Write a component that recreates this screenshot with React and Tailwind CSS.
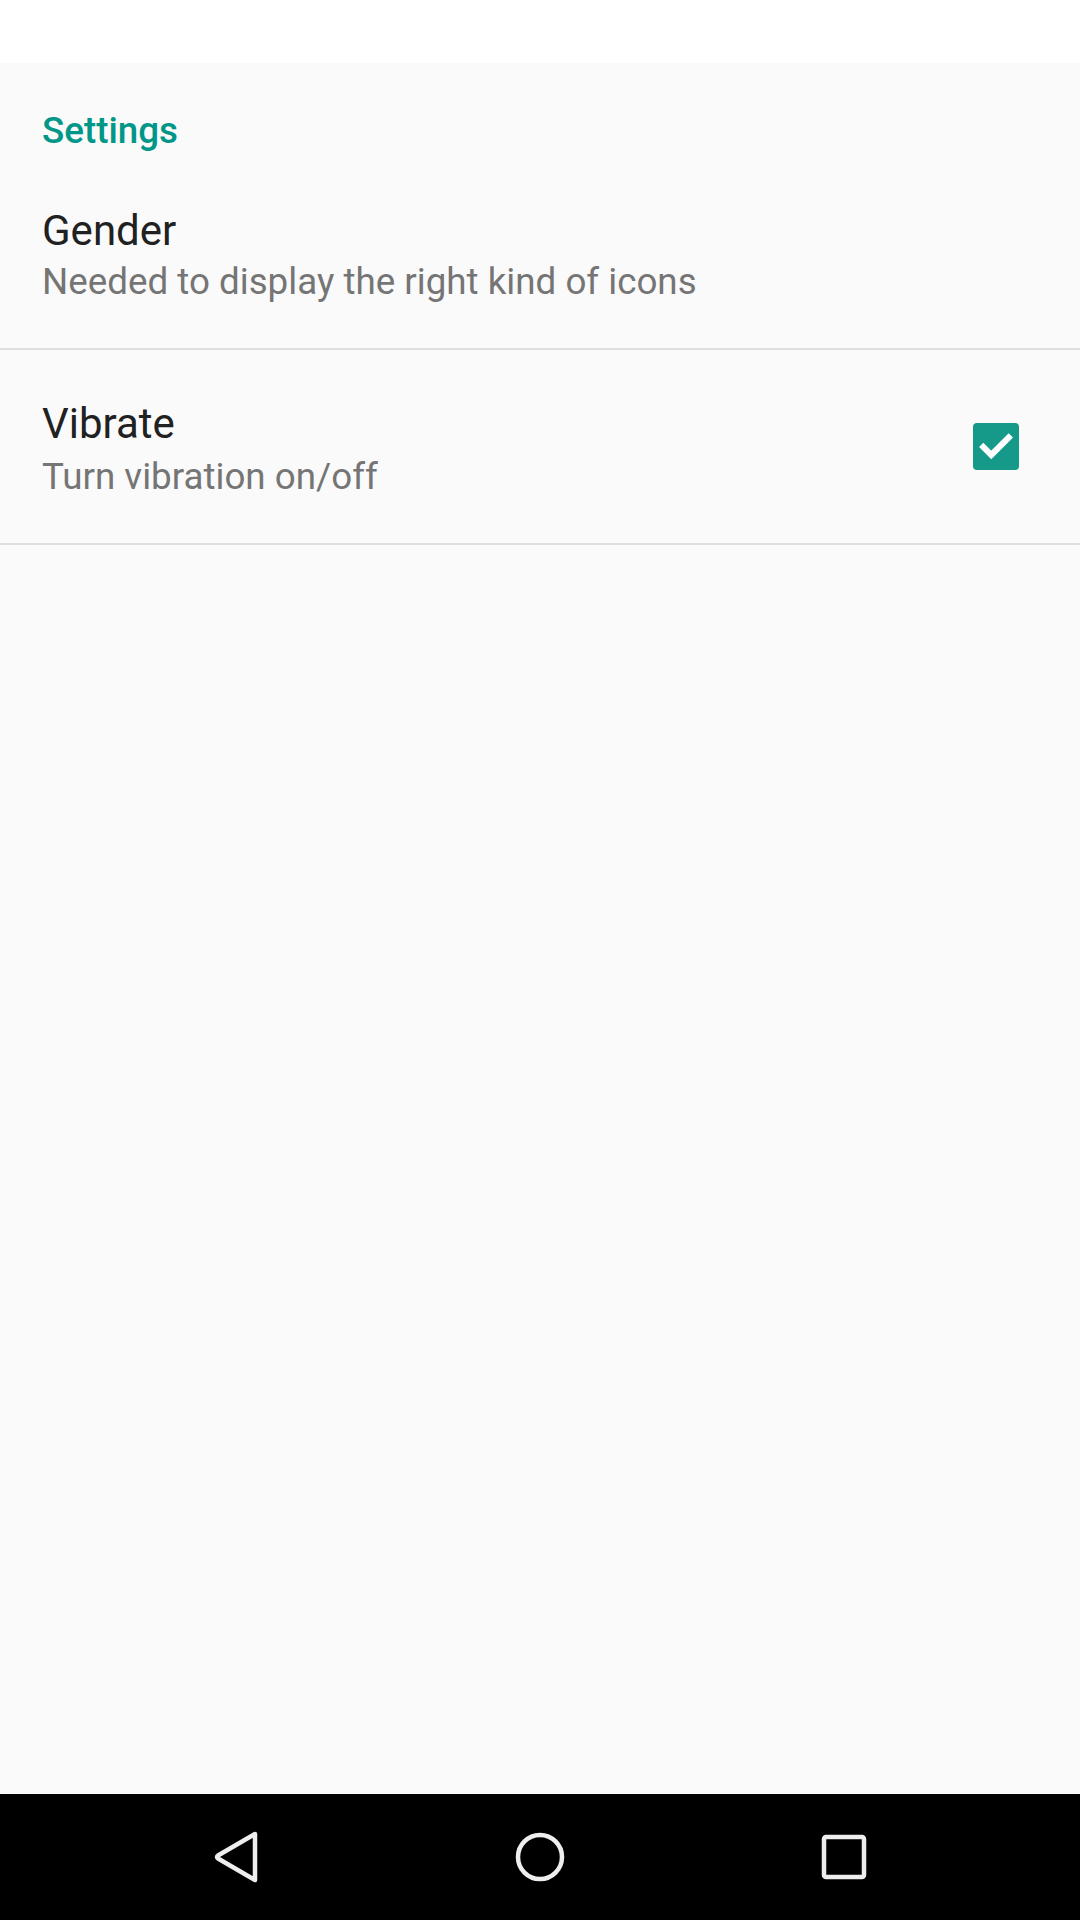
import { Check } from 'lucide-react'

const Row = ({ title, summary, className, gap, children }) => (
  <div className={`flex items-center border-b-2 border-[#dedede] pl-[42px] pr-[61px] ${className}`}>
    <div className="flex-1 flex flex-col">
      <span className="text-[42px] leading-[42px] text-[#212121]">{title}</span>
      <span className={`${gap} text-[36.75px] leading-[36.75px] text-[#757575]`}>{summary}</span>
    </div>
    {children}
  </div>
)

const App = () => {
  return (
    <div className="w-[1080px] h-[1920px] flex flex-col bg-[#fafafa] font-['Roboto',sans-serif]">
      <div className="h-[63px] bg-white" />

      <div className="flex-1 flex flex-col">
        <div className="pt-[50px] pl-[42px] text-[36.75px] leading-[36.75px] font-medium text-[#009688]">
          Settings
        </div>

        <Row
          title="Gender"
          summary="Needed to display the right kind of icons"
          gap="mt-[12px]"
          className="pt-[60px] pb-[47px]"
        />

        <Row
          title="Vibrate"
          summary="Turn vibration on/off"
          gap="mt-[14px]"
          className="pt-[53px] pb-[48px]"
        >
          <div className="mb-[4px] w-[46px] h-[47px] rounded-[4px] bg-[#159a89] flex items-center justify-center">
            <Check className="w-[38px] h-[38px] text-white" strokeWidth={3.8} strokeLinecap="square" strokeLinejoin="miter" />
          </div>
        </Row>
      </div>

      <div className="h-[126px] bg-black flex items-center justify-center">
        <div className="w-[304px] flex justify-center">
          <svg width="48" height="52" viewBox="0 0 48 52" fill="none">
            <path d="M43 3 L6 24.5 Q4 26 6 27.5 L43 49 Z" stroke="#eeeeee" strokeWidth="4.5" strokeLinejoin="round" />
          </svg>
        </div>
        <div className="w-[304px] flex justify-center">
          <svg width="52" height="52" viewBox="0 0 52 52" fill="none">
            <circle cx="26" cy="26" r="22" stroke="#eeeeee" strokeWidth="4.5" />
          </svg>
        </div>
        <div className="w-[304px] flex justify-center">
          <svg width="46" height="46" viewBox="0 0 46 46" fill="none">
            <rect x="3" y="3" width="40" height="40" rx="2" stroke="#eeeeee" strokeWidth="4.5" />
          </svg>
        </div>
      </div>
    </div>
  )
}

export default App
